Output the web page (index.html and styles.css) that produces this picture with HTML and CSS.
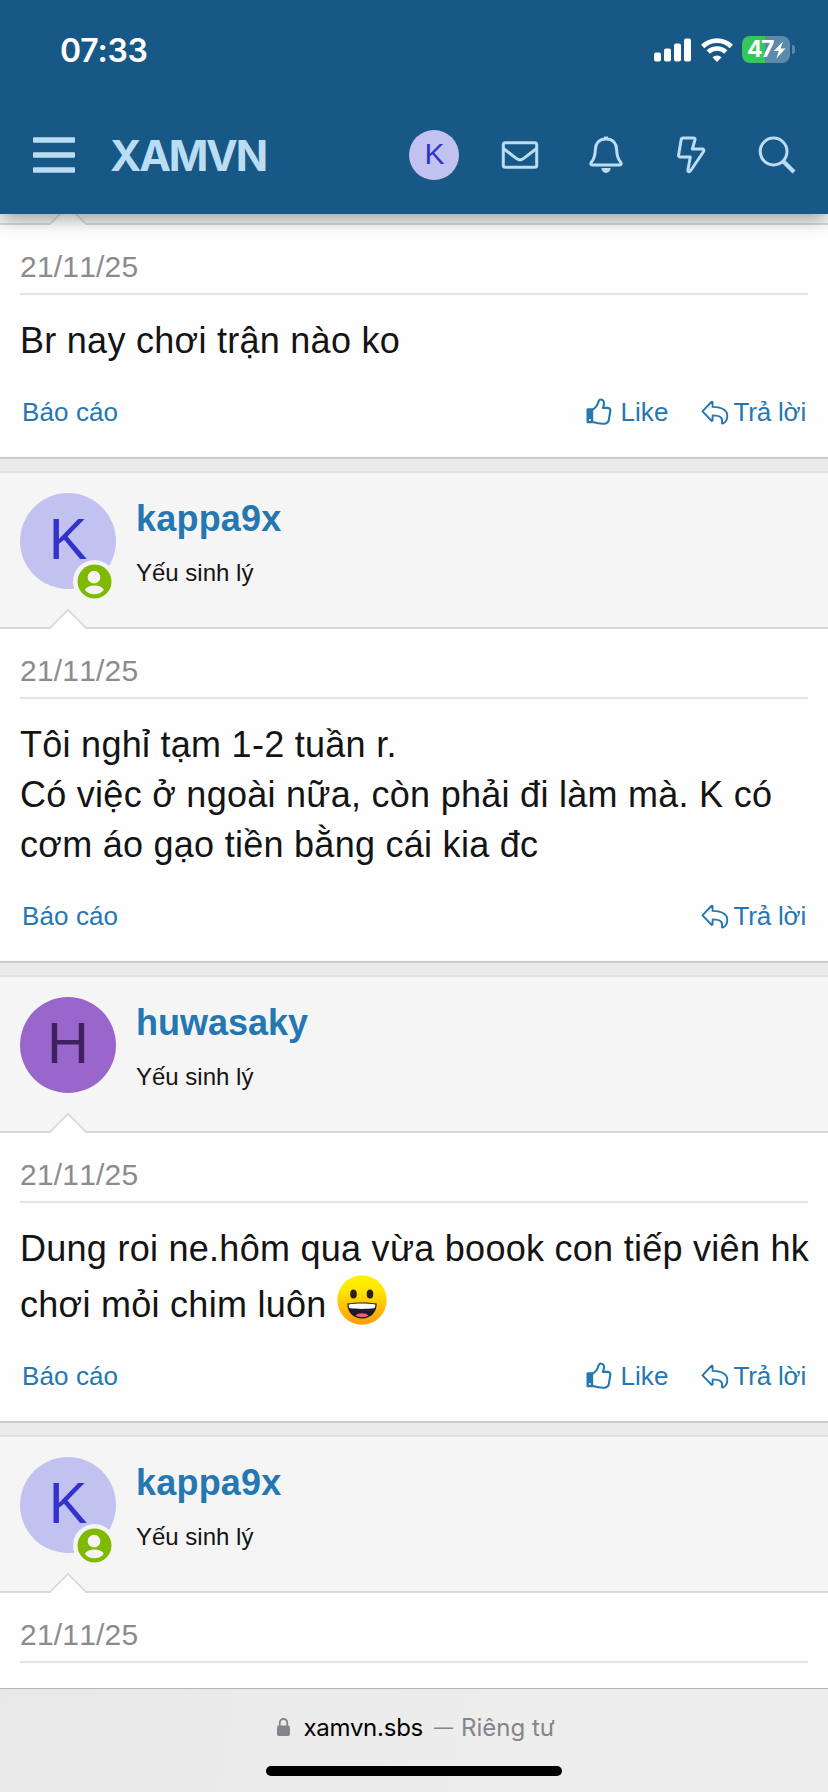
FILE: index.html
```html
<!DOCTYPE html>
<html lang="vi">
<head>
<meta charset="utf-8">
<title>XAMVN</title>
<link rel="stylesheet" href="styles.css">
</head>
<body>
<svg class="defs" aria-hidden="true">
  <defs>
    <linearGradient id="face" x1="0" y1="0" x2="0" y2="1">
      <stop offset="0" stop-color="#fff200"/><stop offset=".3" stop-color="#ffe600"/><stop offset="1" stop-color="#ff9a0a"/>
    </linearGradient>
    <symbol id="arrow" viewBox="0 0 38 21">
      <path d="M1 21 19 3 37 21Z" fill="#fefefe"/>
      <path d="M.5 20.500 19 2 37.500 20.500" fill="none" stroke="#d8d8d8" stroke-width="1.600"/>
    </symbol>
    <symbol id="like" viewBox="0 0 26 27">
      <path d="M1.500 10.300h5.700v14.900H1.500A1 1 0 0 1 .5 24.200V11.300a1 1 0 0 1 1-1Z" fill="currentColor"/>
      <circle cx="3.900" cy="22" r="1" fill="#fefefe"/>
      <path d="M7 11.600c2.600-1.600 4.200-3.700 4.900-6.100.5-2.100.9-4 2.800-4s3.700 1.600 3.300 4.400c-.2 1.600-.8 2.600-1.100 4h5c1.800.1 2.700 1.500 2.400 3.100l-1.500 9.200c-.4 2.400-1.900 3.300-4.200 3.500-4.600.3-8-.5-11.600-1.700" fill="none" stroke="currentColor" stroke-width="2.100" stroke-linejoin="round"/>
    </symbol>
    <symbol id="reply" viewBox="0 0 28 25">
      <path d="M1.500 11.300 10.300 2q1-.9 1.300.4v4.500C20.500 7.200 26.300 10 26.300 16c0 3.200-1.600 6.100-4.200 7.400-1 .4-1.500-.2-1.200-1.100.9-3.800-.6-6.700-9.300-6.900v4.600q-.3 1.400-1.300.5Z" fill="none" stroke="currentColor" stroke-width="1.900" stroke-linejoin="round"/>
    </symbol>
    <symbol id="online" viewBox="0 0 36 36">
      <circle cx="18" cy="18" r="17.500" fill="#7fb900"/>
      <circle cx="17.500" cy="13.500" r="6.500" fill="#f5f5f5"/>
      <path d="M8 26.500c2-3.100 6-4.300 9.800-4.300s8 1.200 9.800 4.300c-2.200 3.200-6 4.700-9.800 4.700S10.200 29.700 8 26.500Z" fill="#f5f5f5"/>
    </symbol>
  </defs>
</svg>
<div class="screen">
  <header class="top">
    <div class="status">
      <span class="clock">07:33</span>
      <div class="indicators">
        <svg class="signal" viewBox="0 0 37 24" fill="#fff"><rect y="14.500" width="7" height="9" rx="2"/><rect x="10" y="10.500" width="7" height="13" rx="2"/><rect x="20" y="5.500" width="7" height="18" rx="2"/><rect x="30" y=".5" width="7" height="23" rx="2"/></svg>
        <svg class="wifi" viewBox="0 0 32 24"><path d="M1.700 8.500a20.400 20.400 0 0 1 28.600 0M7.200 14a12.800 12.800 0 0 1 17.600 0" fill="none" stroke="#fff" stroke-width="4.600"/><path d="m16 24-4.600-4.700a7 7 0 0 1 9.200 0Z" fill="#fff"/></svg>
        <div class="battery">
          <span class="level">47</span>
          <svg class="charge" viewBox="0 0 12 18"><path d="M9.500.5.300 10h5L2.800 17.500 12 7.500H7Z" fill="#fff"/></svg>
        </div>
        <span class="nub"></span>
      </div>
    </div>
    <nav class="nav">
      <svg class="menu" viewBox="0 0 42 36" fill="#bbddf3"><rect y=".3" width="42" height="5.400" rx="1"/><rect y="15.300" width="42" height="5.400" rx="1"/><rect y="30.300" width="42" height="5.400" rx="1"/></svg>
      <span class="brand">XAMVN</span>
      <div class="tools">
        <span class="cell"><span class="me">K</span></span>
        <span class="cell"><svg class="ic" viewBox="0 0 40 40"><rect x="3.300" y="7.800" width="33.400" height="24.400" rx="2" /><path d="m3.500 13.500 12.400 9.600c2.500 2.100 5.700 2.100 8.200 0l12.400-9.600"/></svg></span>
        <span class="cell"><svg class="ic" viewBox="0 0 40 40"><path d="M20 4c-7.200 0-10.400 4.600-10.600 10.200-.2 7.100-1.300 9.800-3.900 12.700-1.300 1.500-.8 3 .9 3h27.200c1.700 0 2.200-1.500.9-3-2.600-2.900-3.700-5.600-3.900-12.700C30.400 8.600 27.200 4 20 4Z"/><path d="M20 1.500v2" stroke-width="4"/><path class="solid" d="M15.400 33h9.200c-.2 3-2 4.900-4.600 4.900s-4.400-1.900-4.600-4.900Z"/></svg></span>
        <span class="cell"><svg class="ic" viewBox="0 0 40 40"><path d="M12 3h10.500c1.200 0 1.800.8 1.500 1.900L21.300 14h9.800c1.500 0 2.200 1.200 1.500 2.500L19.400 36c-1 1.400-2.800.8-2.500-1l2.400-13H9.200c-1.200 0-1.800-.9-1.600-2l2.600-15.400C10.400 3.500 11 3 12 3Z"/></svg></span>
        <span class="cell"><svg class="ic" viewBox="0 0 40 40"><circle cx="16.600" cy="16.500" r="13.400"/><path d="m26 26 11 11" stroke-width="4.200"/></svg></span>
      </div>
    </nav>
  </header>

  <main class="thread">
    <article class="post first">
      <div class="author cut"><svg class="arrow"><use href="#arrow"/></svg></div>
      <div class="body">
        <div class="date">21/11/25</div>
        <p class="text">Br nay chơi trận nào ko</p>
        <div class="actions"><a>Báo cáo</a><a class="like"><svg><use href="#like"/></svg>Like</a><a class="reply"><svg><use href="#reply"/></svg>Trả lời</a></div>
      </div>
    </article>

    <article class="post">
      <div class="author">
        <div class="avatar k">K<svg class="online"><use href="#online"/></svg></div>
        <div class="who"><b>kappa9x</b><span>Yếu sinh lý</span></div>
        <svg class="arrow"><use href="#arrow"/></svg>
      </div>
      <div class="body">
        <div class="date">21/11/25</div>
        <p class="text">Tôi nghỉ tạm 1-2 tuần r.<br>Có việc ở ngoài nữa, còn phải đi làm mà. K có<br>cơm áo gạo tiền bằng cái kia đc</p>
        <div class="actions"><a>Báo cáo</a><a class="reply alone"><svg><use href="#reply"/></svg>Trả lời</a></div>
      </div>
    </article>

    <article class="post">
      <div class="author">
        <div class="avatar h">H</div>
        <div class="who"><b class="tight">huwasaky</b><span>Yếu sinh lý</span></div>
        <svg class="arrow"><use href="#arrow"/></svg>
      </div>
      <div class="body">
        <div class="date">21/11/25</div>
        <p class="text">Dung roi ne.hôm qua vừa boook con tiếp viên hk<br>chơi mỏi chim luôn <svg class="emoji" viewBox="0 0 50 50"><circle cx="25" cy="25" r="24.700" fill="url(#face)"/><ellipse cx="16.500" cy="19" rx="3.300" ry="4.500" fill="#2b1c22"/><ellipse cx="33" cy="19" rx="3.300" ry="4.500" fill="#2b1c22"/><path d="M10.300 28.500c9-1.500 20.400-1.500 29.400 0 0 8.500-5.700 15-14.700 15s-14.700-6.500-14.700-15Z" fill="#1d1a2b"/><path d="M11.600 29.400c8-1.300 18.800-1.300 26.800 0 0 2.200-.6 3.600-1.500 3.900-7 .8-16.800.8-23.800 0-.9-.3-1.500-1.700-1.500-3.900Z" fill="#fff"/><path d="M18.500 40.700c2-3.300 11-3.300 13 0-3.500 1.900-9.500 1.900-13 0Z" fill="#ff5a73"/></svg></p>
        <div class="actions"><a>Báo cáo</a><a class="like"><svg><use href="#like"/></svg>Like</a><a class="reply"><svg><use href="#reply"/></svg>Trả lời</a></div>
      </div>
    </article>

    <article class="post last">
      <div class="author">
        <div class="avatar k">K<svg class="online"><use href="#online"/></svg></div>
        <div class="who"><b>kappa9x</b><span>Yếu sinh lý</span></div>
        <svg class="arrow"><use href="#arrow"/></svg>
      </div>
      <div class="body">
        <div class="date">21/11/25</div>
      </div>
    </article>
  </main>

  <footer class="browser">
    <div class="address">
      <svg class="lock" viewBox="0 0 13 18"><rect y="7.500" width="13" height="10.500" rx="2" fill="#85848a"/><path d="M2.700 8V5a3.800 4 0 0 1 7.600 0v3" fill="none" stroke="#85848a" stroke-width="1.800"/></svg>
      <span class="host">xamvn.sbs</span><span class="dash">—</span><span class="private">Riêng tư</span>
    </div>
    <div class="home"></div>
  </footer>
</div>
</body>
</html>
```

FILE: styles.css
```css
* { box-sizing: border-box; }
body { margin: 0; font-family: "Liberation Sans", Arial, sans-serif; color: #141414; }
.defs { position: absolute; width: 0; height: 0; }
.screen { width: 828px; height: 1792px; display: flex; flex-direction: column; overflow: hidden; background: #fefefe; }

.top { flex: none; height: 214px; background: #185886; position: relative; z-index: 2; box-shadow: 0 8px 16px -2px rgba(0,0,0,.33); }
.status { height: 96px; display: flex; justify-content: space-between; padding: 0 33px 0 60px; color: #fff; font-family: Inter, sans-serif; }
.clock { font-size: 32px; line-height: 40px; font-weight: 600; letter-spacing: -.2px; margin-top: 31px; }
.indicators { display: flex; align-items: center; height: 27px; margin-top: 36px; }
.signal { width: 37px; height: 24px; margin: 1px 10px 0 0; }
.wifi { width: 32px; height: 24px; margin-right: 9px; }
.battery { width: 48px; height: 27px; border-radius: 8px; background: linear-gradient(90deg, #34c759 48%, #5d8aab 48%); display: flex; align-items: center; padding-left: 5px; }
.level { font-size: 23px; line-height: 27px; font-weight: 700; letter-spacing: -1.600px; width: 26px; }
.charge { flex: none; width: 13px; height: 18px; }
.nub { width: 3px; height: 9px; margin-left: 2px; border-radius: 0 4px 4px 0; background: #5d8aab; }

.nav { height: 118px; display: flex; align-items: center; padding: 0 8px 0 33px; color: #bbddf3; }
.menu { width: 42px; height: 36px; }
.brand { margin-left: 35px; font: 700 42.500px/50px Inter, sans-serif; letter-spacing: -2.200px; padding-top: 1px; }
.tools { margin-left: auto; display: flex; }
.cell { width: 85.700px; height: 50px; display: flex; align-items: center; justify-content: center; }
.me { width: 50px; height: 50px; border-radius: 50%; background: #c2c2f0; color: #3333cc; font-size: 30px; line-height: 48px; text-align: center; }
.ic { width: 40px; height: 40px; fill: none; stroke: #bbddf3; stroke-width: 3; stroke-linejoin: round; }
.ic .solid { fill: #bbddf3; stroke: none; }

.thread { flex: 1; min-height: 0; overflow: hidden; background: #ebebeb; }
.post { border-top: 2px solid #dfdfdf; border-bottom: 2px solid #cbcbcb; margin-bottom: 12px; background: #fefefe; }
.post.first { border-top: 0; }
.post.last { min-height: 400px; }
.author { position: relative; height: 156px; padding: 20px; background: #f5f5f5; border-bottom: 2px solid #d8d8d8; display: flex; gap: 20px; }
.author.cut { height: 11px; padding: 0; }
.arrow { position: absolute; left: 49px; bottom: -2px; width: 38px; height: 21px; }
.avatar { position: relative; width: 96px; height: 96px; border-radius: 50%; font-size: 58px; line-height: 92px; text-align: center; }
.avatar.k { background: #c2c2f0; color: #3333cc; }
.avatar.h { background: #9966cc; color: #402060; }
.online { position: absolute; left: 53px; top: 67px; width: 43px; height: 43px; padding: 4px; border-radius: 50%; background: #f5f5f5; }
.who { display: flex; flex-direction: column; }
.who b { font-size: 36px; line-height: 50px; padding-top: 1px; color: #2577b1; letter-spacing: .2px; }
.who .tight { letter-spacing: 0; }
.who span { font-size: 24px; line-height: 34px; margin-top: 12px; }
.date { margin: 0 20px; height: 70px; border-bottom: 2px solid #e5e5e5; font-size: 30px; line-height: 34px; padding-top: 25px; color: #8c8c8c; font-kerning: none; letter-spacing: .2px; }
.text { margin: 0 20px -1px; padding-top: 21px; font-size: 36px; line-height: 50px; letter-spacing: .27px; white-space: nowrap; }
.emoji { width: 50px; height: 50px; vertical-align: -8px; margin: .5px 0 0; }
.actions { display: flex; padding: 29px 22px 27px 22px; font-size: 26px; line-height: 36px; color: #2577b1; letter-spacing: .1px; }
.actions a { display: flex; }
.like { margin-left: auto; }
.like svg { width: 26px; height: 27px; margin: 4px 8px 0 0; }
.reply { margin-left: 32px; letter-spacing: -.2px; }
.reply.alone { margin-left: auto; }
.reply svg { width: 28px; height: 25px; margin: 6px 5px 0 0; }

.browser { flex: none; height: 104px; border-top: 1px solid #b5b5b5; background: linear-gradient(100deg, #e8e8e8, #ededed 60%); position: relative; z-index: 1; display: flex; flex-direction: column; align-items: center; }
.address { display: flex; align-items: center; height: 32px; margin: 23px 0 0 4px; font: 24px/32px Inter, sans-serif; }
.lock { width: 13px; height: 18px; margin: -2px 13px 0 0; }
.host { color: #000; letter-spacing: -.25px; }
.dash, .private { color: #85848a; }
.dash { margin: 0 8px 0 11px; font-size: 19px; }
.home { width: 296px; height: 10px; border-radius: 5px; background: #000; margin-top: 22px; }
```
